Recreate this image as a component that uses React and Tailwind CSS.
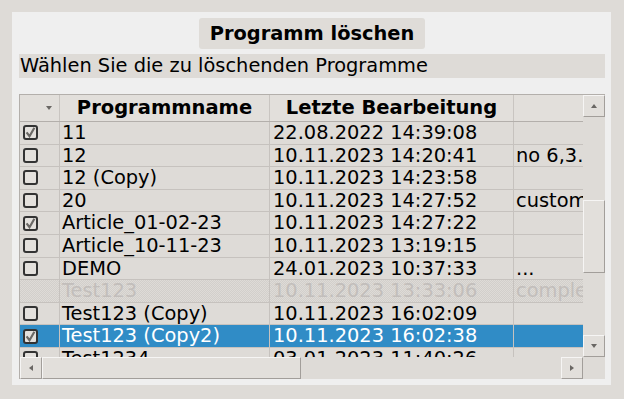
import React from 'react'

const ROWS = [
  { name: '11', date: '22.08.2022 14:39:08', note: '', checked: true },
  { name: '12', date: '10.11.2023 14:20:41', note: 'no 6,3.5' },
  { name: '12 (Copy)', date: '10.11.2023 14:23:58', note: '' },
  { name: '20', date: '10.11.2023 14:27:52', note: 'customer' },
  { name: 'Article_01-02-23', date: '10.11.2023 14:27:22', note: '', checked: true },
  { name: 'Article_10-11-23', date: '10.11.2023 13:19:15', note: '' },
  { name: 'DEMO', date: '24.01.2023 10:37:33', note: '...' },
  { name: 'Test123', date: '10.11.2023 13:33:06', note: 'complete', disabled: true },
  { name: 'Test123 (Copy)', date: '10.11.2023 16:02:09', note: '' },
  { name: 'Test123 (Copy2)', date: '10.11.2023 16:02:38', note: '', checked: true, selected: true },
  { name: 'Test1234', date: '03.01.2023 11:40:26', note: '' },
]

function CheckBox({ checked }) {
  return (
    <span className="flex-none w-[15px] h-[15px] rounded-[3px] border-2 border-[#333] bg-[#e4e1dd] flex items-center justify-center">
      {checked && (
        <svg width="11" height="11" viewBox="0 0 11 11" className="flex-none">
          <path d="M1.6 5.4 L4.5 9.2 L9.4 0.8" fill="none" stroke="#6b6966" strokeWidth="2.2" />
        </svg>
      )}
    </span>
  )
}

function Arrow({ dir }) {
  const pts = {
    up: '0,4 3,0 6,4',
    down: '0,0 3,4 6,0',
    left: '4,0 0,3 4,6',
    right: '0,0 4,3 0,6',
  }[dir]
  const vert = dir === 'up' || dir === 'down'
  return (
    <svg width={vert ? 6 : 4} height={vert ? 4 : 6} viewBox={vert ? '0 0 6 4' : '0 0 4 6'}>
      <polygon points={pts} fill="#6a6764" />
    </svg>
  )
}

function ScrollBtn({ dir }) {
  return (
    <div className="flex-none w-[22px] h-[22px] bg-[#e2dfdb] border border-t-[#f6f5f4] border-l-[#f6f5f4] border-r-[#a29e9a] border-b-[#a29e9a] flex items-center justify-center">
      <Arrow dir={dir} />
    </div>
  )
}

export default function App() {
  return (
    <div className="w-[624px] h-[399px] bg-[#dedbd7] pt-[12px] pl-[12px] pr-[13px] pb-[14px] font-['DejaVu_Sans',sans-serif] text-black overflow-hidden">
      <div className="w-full h-full bg-[#efefef] pt-[6px] pl-[7px] pr-[6px] flex flex-col">
        <div className="flex justify-center">
          <div className="h-[31px] px-[11px] rounded-[3px] bg-[#dfdcd8] flex items-center text-[19.4px] font-bold whitespace-nowrap">Programm löschen</div>
        </div>
        <div className="mt-[5px] h-[24px] bg-[#dedbd7] flex items-center pl-[1px] text-[19.4px] leading-none whitespace-nowrap">Wählen Sie die zu löschenden Programme</div>

        <div className="mt-[16px] h-[285px] border-t border-l border-[#b3afab] bg-[#dedbd7] flex flex-col">
          <div className="flex flex-1 min-h-0">
            <div className="w-[563px] flex flex-col overflow-hidden">
              {/* header */}
              <div className="flex-none h-[27px] flex border-b border-[#b3afab] bg-[#e2dfdb] font-bold text-[19.5px] leading-none whitespace-nowrap">
                <div className="w-[40px] flex-none border-r border-[#c9c5c1] flex items-center justify-end pr-[7px]">
                  <Arrow dir="down" />
                </div>
                <div className="w-[210px] flex-none border-r border-[#c9c5c1] flex items-center justify-center">Programmname</div>
                <div className="w-[244px] flex-none border-r border-[#c9c5c1] flex items-center justify-center">Letzte Bearbeitung</div>
                <div className="flex-1"></div>
              </div>
              {ROWS.map((r) => {
                const base = r.selected
                  ? 'bg-[#308cc6] text-white'
                  : r.disabled
                    ? 'text-[#c2bebb] bg-[length:2px_2px] bg-[image:repeating-conic-gradient(#d2cfcb_0_25%,#dedbd7_0_50%)]'
                    : 'text-black'
                return (
                  <div key={r.name} className={`flex-none h-[22.6px] flex border-b border-[#c6c2be] text-[19.4px] leading-none whitespace-nowrap ${base}`}>
                    <div className="w-[40px] flex-none border-r border-[#c6c2be] flex items-center pl-[3px]">
                      {!r.disabled && <CheckBox checked={r.checked} />}
                    </div>
                    <div className="w-[210px] flex-none border-r border-[#c6c2be] flex items-center pl-[2px] overflow-hidden">{r.name}</div>
                    <div className="w-[244px] flex-none border-r border-[#c6c2be] flex items-center pl-[3px] overflow-hidden">{r.date}</div>
                    <div className="flex-1 flex items-center pl-[2px] overflow-hidden">{r.note}</div>
                  </div>
                )
              })}
            </div>
            {/* vertical scrollbar */}
            <div className="w-[22px] flex-none flex flex-col bg-[#dedbd7]">
              <ScrollBtn dir="up" />
              <div className="flex-1 flex flex-col pt-[83px] pb-[40px]">
                <div className="h-[73px] bg-[#e2dfdb] border border-t-[#f6f5f4] border-l-[#f6f5f4] border-r-[#a29e9a] border-b-[#a29e9a]"></div>
              </div>
              <ScrollBtn dir="down" />
            </div>
          </div>
          {/* horizontal scrollbar */}
          <div className="flex-none h-[22px] flex">
            <div className="w-[563px] flex-none flex">
              <ScrollBtn dir="left" />
              <div className="w-[259px] h-[22px] bg-[#e2dfdb] border border-t-[#f6f5f4] border-l-[#f6f5f4] border-r-[#a29e9a] border-b-[#a29e9a]"></div>
              <div className="flex-1"></div>
              <ScrollBtn dir="right" />
            </div>
            <div className="flex-1"></div>
          </div>
        </div>
      </div>
    </div>
  )
}
